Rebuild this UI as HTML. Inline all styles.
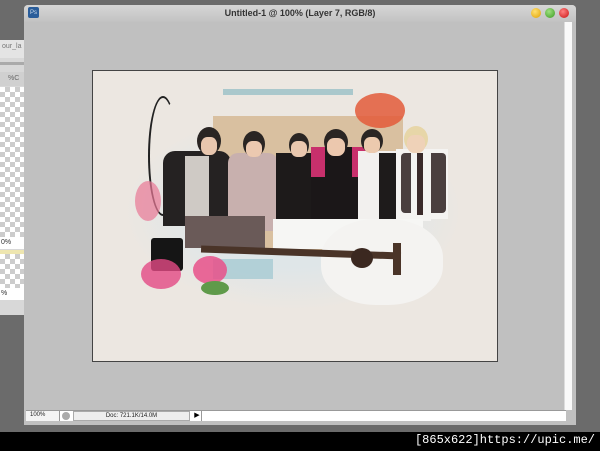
<!DOCTYPE html>
<html><head><meta charset="utf-8"><style>
*{margin:0;padding:0;box-sizing:border-box}
body{width:600px;height:451px;background:#6b6b6b;position:relative;overflow:hidden;font-family:"Liberation Sans",sans-serif}
.a{position:absolute}
</style></head><body>
<!-- left panel -->
<div class="a" style="left:0;top:40px;width:24px;height:275px;background:#d8d8d8"></div>
<div class="a" style="left:0;top:40px;width:24px;height:18px;background:#e4e4e4;font-size:7px;color:#777;padding:3px 0 0 2px">our_la</div>
<div class="a" style="left:0;top:62px;width:24px;height:3px;background:#aaa"></div>
<div class="a" style="left:0;top:72px;width:24px;height:14px;background:#d0d0d0;font-size:7px;color:#666;padding:3px 0 0 8px">%C</div>
<div class="a" style="left:0;top:87px;width:24px;height:150px;background-color:#fff;background-image:linear-gradient(45deg,#ccc 25%,transparent 25%,transparent 75%,#ccc 75%),linear-gradient(45deg,#ccc 25%,transparent 25%,transparent 75%,#ccc 75%);background-size:10px 10px;background-position:0 0,5px 5px"></div>
<div class="a" style="left:0;top:237px;width:24px;height:12px;background:#fff;font-size:7px;color:#333;padding:2px 0 0 1px">0%</div>
<div class="a" style="left:0;top:250px;width:24px;height:4px;background:#eee6b0"></div>
<div class="a" style="left:0;top:254px;width:24px;height:34px;background-color:#fff;background-image:linear-gradient(45deg,#ccc 25%,transparent 25%,transparent 75%,#ccc 75%),linear-gradient(45deg,#ccc 25%,transparent 25%,transparent 75%,#ccc 75%);background-size:10px 10px;background-position:0 0,5px 5px"></div>
<div class="a" style="left:0;top:288px;width:24px;height:12px;background:#fff;font-size:7px;color:#333;padding:2px 0 0 1px">%</div>
<!-- window -->
<div class="a" style="left:24px;top:5px;width:552px;height:420px;background:#c0c0c0;border-radius:4px 4px 0 0"></div>
<div class="a" style="left:24px;top:5px;width:552px;height:17px;background:linear-gradient(#d6d6d6,#c2c2c2);border-radius:4px 4px 0 0;font-size:9px;font-weight:bold;color:#333;text-align:center;line-height:17px">Untitled-1 @ 100% (Layer 7, RGB/8)</div>
<div class="a" style="left:28px;top:7px;width:11px;height:11px;background:#2a5d9a;border-radius:2px;color:#cde;font-size:6px;text-align:center;line-height:12px">Ps</div>
<div class="a" style="left:531px;top:8px;width:10px;height:10px;border-radius:50%;background:radial-gradient(circle at 40% 35%,#ffe070,#e0a000)"></div>
<div class="a" style="left:545px;top:8px;width:10px;height:10px;border-radius:50%;background:radial-gradient(circle at 40% 35%,#9fe080,#3a9a20)"></div>
<div class="a" style="left:559px;top:8px;width:10px;height:10px;border-radius:50%;background:radial-gradient(circle at 40% 35%,#ff8080,#c81010)"></div>
<div class="a" style="left:564px;top:22px;width:8px;height:388px;background:#fafafa;border-left:1px solid #ddd"></div>
<!-- status bar -->
<div class="a" style="left:26px;top:410px;width:540px;height:11px;background:#fff;border-top:1px solid #999"></div>
<div class="a" style="left:26px;top:411px;width:34px;height:10px;background:#f4f4f4;border-right:1px solid #999;font-size:6px;color:#222;padding:1px 0 0 4px">100%</div>
<div class="a" style="left:62px;top:412px;width:8px;height:8px;border-radius:50%;background:#aaa"></div>
<div class="a" style="left:73px;top:411px;width:117px;height:10px;background:#eee;border:1px solid #aaa;font-size:6px;color:#222;text-align:center;padding-top:1px">Doc: 721.1K/14.0M</div>
<div class="a" style="left:193px;top:411px;width:9px;height:10px;background:#fff;border-right:1px solid #999;font-size:7px;line-height:10px;text-align:center">▶</div>
<!-- image -->
<div class="a" style="left:92px;top:70px;width:406px;height:292px;background:#ece7e1;border:1px solid #444;overflow:hidden">
 <div class="a" style="left:30px;top:40px;width:340px;height:200px;border-radius:50%;background:radial-gradient(ellipse,#dfe6e8 40%,transparent 70%)"></div>
 <div class="a" style="left:130px;top:18px;width:130px;height:6px;background:#aac8cc"></div>
 <div class="a" style="left:120px;top:45px;width:190px;height:135px;background:#d9c0a0"></div>
 <div class="a" style="left:262px;top:22px;width:50px;height:35px;border-radius:50%;background:#e35a3a;opacity:.85"></div>
 <div class="a" style="left:55px;top:25px;width:30px;height:120px;border:2px solid #222;border-radius:50%;border-right-color:transparent"></div>
 <!-- people -->
 <div class="a" style="left:70px;top:80px;width:68px;height:75px;background:#252222;border-radius:12px 12px 0 0"></div>
 <div class="a" style="left:92px;top:85px;width:24px;height:65px;background:#cfcac5"></div>
 <div class="a" style="left:104px;top:56px;width:24px;height:28px;border-radius:50%;background:#2a2523"></div>
 <div class="a" style="left:108px;top:66px;width:16px;height:18px;border-radius:40%;background:#e8c6ae"></div>
 <div class="a" style="left:135px;top:82px;width:50px;height:78px;background:#c8b0ae;border-radius:10px 10px 0 0"></div>
 <div class="a" style="left:150px;top:60px;width:22px;height:26px;border-radius:50%;background:#2a2523"></div>
 <div class="a" style="left:153px;top:70px;width:16px;height:16px;border-radius:40%;background:#ecc9b0"></div>
 <div class="a" style="left:183px;top:82px;width:40px;height:68px;background:#1d1a1a"></div>
 <div class="a" style="left:196px;top:62px;width:20px;height:24px;border-radius:50%;background:#2a2523"></div>
 <div class="a" style="left:198px;top:70px;width:16px;height:16px;border-radius:40%;background:#e9c7ae"></div>
 <div class="a" style="left:218px;top:76px;width:55px;height:72px;background:#1b1718;border-radius:10px 10px 0 0"></div>
 <div class="a" style="left:218px;top:76px;width:14px;height:30px;background:#c8306c"></div>
 <div class="a" style="left:259px;top:76px;width:14px;height:30px;background:#c8306c"></div>
 <div class="a" style="left:231px;top:58px;width:24px;height:26px;border-radius:50%;background:#2a2523"></div>
 <div class="a" style="left:234px;top:67px;width:18px;height:18px;border-radius:40%;background:#ecc8ae"></div>
 <div class="a" style="left:265px;top:80px;width:40px;height:72px;background:#f2f0ee"></div>
 <div class="a" style="left:286px;top:82px;width:20px;height:68px;background:#1e1b1b"></div>
 <div class="a" style="left:268px;top:58px;width:22px;height:24px;border-radius:50%;background:#2a2523"></div>
 <div class="a" style="left:271px;top:66px;width:16px;height:16px;border-radius:40%;background:#eccaae"></div>
 <div class="a" style="left:303px;top:78px;width:52px;height:70px;background:#f4f3f1"></div>
 <div class="a" style="left:308px;top:82px;width:45px;height:60px;background:#4a3f3f;border-radius:4px"></div>
 <div class="a" style="left:318px;top:80px;width:20px;height:70px;background:#f4f3f1"></div>
 <div class="a" style="left:324px;top:82px;width:6px;height:62px;background:#3a2a2a"></div>
 <div class="a" style="left:311px;top:55px;width:24px;height:26px;border-radius:50%;background:#e7d6a8"></div>
 <div class="a" style="left:314px;top:64px;width:18px;height:18px;border-radius:40%;background:#efd2b8"></div>
 <div class="a" style="left:180px;top:148px;width:150px;height:30px;background:#f6f6f4"></div>
 <div class="a" style="left:92px;top:145px;width:80px;height:32px;background:#6a5a58"></div>
 <!-- guitar -->
 <div class="a" style="left:228px;top:148px;width:122px;height:86px;border-radius:45%;background:#f4f3f1"></div>
 <div class="a" style="left:108px;top:178px;width:200px;height:7px;background:#4a3428;transform:rotate(2deg)"></div>
 <div class="a" style="left:258px;top:177px;width:22px;height:20px;border-radius:50%;background:#3b2820"></div>
 <div class="a" style="left:300px;top:172px;width:8px;height:32px;background:#4a3428"></div>
 <div class="a" style="left:58px;top:167px;width:32px;height:33px;background:#151515;border-radius:3px"></div>
 <div class="a" style="left:120px;top:188px;width:60px;height:20px;background:#9ec6d0;opacity:.7"></div>
 <!-- flowers -->
 <div class="a" style="left:48px;top:188px;width:40px;height:30px;border-radius:50%;background:#e44a84;opacity:.8"></div>
 <div class="a" style="left:100px;top:185px;width:34px;height:28px;border-radius:50%;background:#e8508a;opacity:.85"></div>
 <div class="a" style="left:108px;top:210px;width:28px;height:14px;border-radius:50%;background:#5f9a4a"></div>
 <div class="a" style="left:42px;top:110px;width:26px;height:40px;border-radius:50%;background:#e87896;opacity:.7"></div>
</div>
<!-- bottom strip -->
<div class="a" style="left:0;top:432px;width:600px;height:19px;background:#000"></div>
<div class="a" style="right:5px;top:433px;font-family:'Liberation Mono',monospace;font-size:12px;color:#fff">[865x622]https://upic.me/</div>
</body></html>
